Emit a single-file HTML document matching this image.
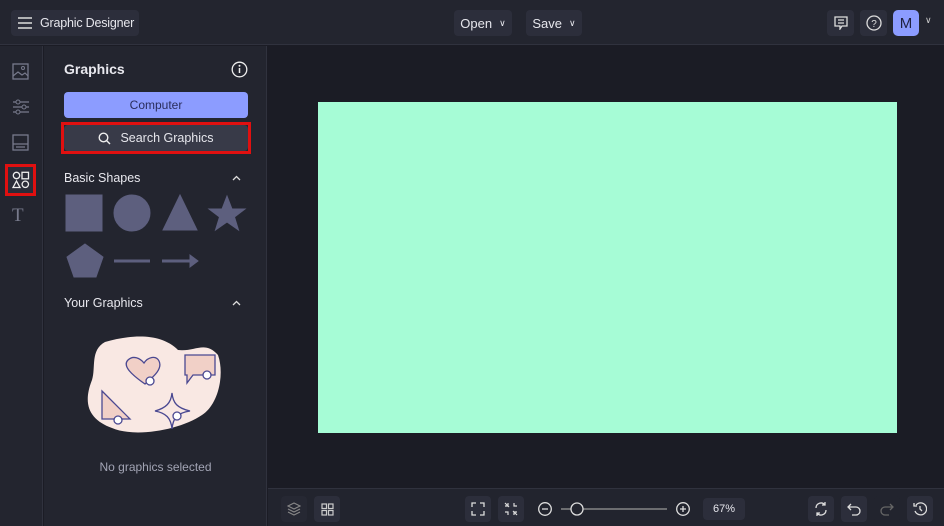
<!DOCTYPE html>
<html><head><meta charset="utf-8"><style>
*{margin:0;padding:0;box-sizing:border-box}
body{width:944px;height:526px;background:#1b1c25;font-family:"Liberation Sans",sans-serif;color:#e8e8ee;position:relative;overflow:hidden}
.abs{position:absolute;white-space:nowrap}
.btn{position:absolute;background:#2c2e3b;border-radius:4px;display:flex;align-items:center;justify-content:center;font-size:13px;color:#e6e6ec;white-space:nowrap}
svg{display:block}
</style></head><body>
<div class="abs" style="left:0;top:0;width:944px;height:45px;background:#23252f;border-bottom:1px solid #30323e"></div>
<div class="btn" style="left:11px;top:10px;width:128px;height:26px;justify-content:flex-start;padding-left:7px;font-size:12.5px">
<svg width="14" height="12"><path d="M0 1h14M0 6h14M0 11h14" stroke="#ddd" stroke-width="1.5"/></svg><span style="margin-left:8px;letter-spacing:-0.2px">Graphic Designer</span></div>
<div class="btn" style="left:454px;top:10px;width:58px;height:26px">Open <span style="font-size:9px;margin-left:7px">∨</span></div>
<div class="btn" style="left:526px;top:10px;width:56px;height:26px">Save <span style="font-size:9px;margin-left:7px">∨</span></div>
<div class="btn" style="left:827px;top:10px;width:27px;height:26px"><svg width="14" height="14"><path d="M1 1h12v9H8l-2 3v-3H1z M4 4h6M4 7h6" fill="none" stroke="#ddd" stroke-width="1.3"/></svg></div>
<div class="btn" style="left:860px;top:10px;width:27px;height:26px"><svg width="16" height="16"><circle cx="8" cy="8" r="7" fill="none" stroke="#ddd" stroke-width="1.3"/><text x="8" y="12" font-size="10" fill="#ddd" text-anchor="middle" font-family="Liberation Sans">?</text></svg></div>
<div class="btn" style="left:893px;top:10px;width:26px;height:26px;background:#8c9cff;color:#1f2140;font-size:15px;border-radius:5px">M</div>
<div class="abs" style="left:925px;top:15px;font-size:9px;color:#ccc">∨</div>

<div class="abs" style="left:0;top:46px;width:43px;height:480px;background:#23252f;border-right:1px solid #30323e"></div>
<svg class="abs" style="left:12px;top:63px" width="18" height="18"><rect x="1" y="1" width="15" height="15" fill="none" stroke="#777a8c" stroke-width="1.3"/><path d="M1 13l5-4 4 3 3-2 3 3" fill="none" stroke="#777a8c" stroke-width="1.2"/><circle cx="11" cy="5" r="1.5" fill="none" stroke="#777a8c"/></svg>
<svg class="abs" style="left:12px;top:98px" width="18" height="18"><path d="M1 4h16M1 9h16M1 14h16" stroke="#777a8c" stroke-width="1.2"/><circle cx="6" cy="4" r="2" fill="#23252f" stroke="#777a8c"/><circle cx="12" cy="9" r="2" fill="#23252f" stroke="#777a8c"/><circle cx="6" cy="14" r="2" fill="#23252f" stroke="#777a8c"/></svg>
<svg class="abs" style="left:12px;top:134px" width="18" height="18"><rect x="1" y="1" width="15" height="15" fill="none" stroke="#777a8c" stroke-width="1.3"/><path d="M1 10h15M4 13h9" stroke="#777a8c" stroke-width="1.2"/></svg>
<div class="abs" style="left:5px;top:164px;width:31px;height:32px;border:3px solid #e01010;background:#2b2d39"></div>
<svg class="abs" style="left:12px;top:171px" width="18" height="18"><circle cx="4.5" cy="4.5" r="3.2" fill="none" stroke="#eee" stroke-width="1.3"/><rect x="10" y="1.3" width="6.5" height="6.5" fill="none" stroke="#eee" stroke-width="1.3"/><path d="M4.5 10l3.5 6.5H1z" fill="none" stroke="#eee" stroke-width="1.3"/><circle cx="13.3" cy="13.3" r="3.2" fill="none" stroke="#eee" stroke-width="1.3"/></svg>
<div class="abs" style="left:12px;top:205px;font-size:19px;color:#777a8c;font-family:'Liberation Serif',serif">T</div>

<div class="abs" style="left:44px;top:46px;width:223px;height:480px;background:#23252f;border-right:1px solid #30323e"></div>
<div class="abs" style="left:64px;top:61px;font-size:14px;font-weight:bold">Graphics</div>
<svg class="abs" style="left:231px;top:61px" width="17" height="17"><circle cx="8.5" cy="8.5" r="7.3" fill="none" stroke="#eee" stroke-width="1.3"/><path d="M8.5 7v5" stroke="#eee" stroke-width="1.5"/><circle cx="8.5" cy="4.8" r="1" fill="#eee"/></svg>
<div class="btn" style="left:64px;top:92px;width:184px;height:26px;background:#8c9cff;color:#2a2d5c;font-size:12px">Computer</div>
<div class="abs" style="left:61px;top:122px;width:190px;height:32px;border:3px solid #e01010"></div>
<div class="btn" style="left:64px;top:125px;width:184px;height:26px;background:#383a48;font-size:12.5px"><svg width="13" height="13"><circle cx="5.5" cy="5.5" r="4.3" fill="none" stroke="#eee" stroke-width="1.4"/><path d="M8.5 8.5l3.5 3.5" stroke="#eee" stroke-width="1.4"/></svg><span style="margin-left:9px">Search Graphics</span></div>
<div class="abs" style="left:64px;top:171px;font-size:12.5px">Basic Shapes</div>
<svg class="abs" style="left:232px;top:175px" width="9" height="6"><path d="M1 5l3.5-3.5L8 5" fill="none" stroke="#ddd" stroke-width="1.3"/></svg>
<svg class="abs" style="left:64px;top:193px" width="186" height="90">
<g fill="#5d5f7e" stroke="#5d5f7e"><rect x="2" y="2" width="36" height="36"/><circle cx="68" cy="20" r="18"/><path d="M116 2l17 35H99z"/><path d="M163 3l5 13h13l-10.5 8 4 13-11.5-8-11.5 8 4-13L145 16h13z"/>
<path d="M21 51l18 13-7 20H10L3 64z"/><path d="M50 68h36" stroke-width="3" fill="none"/><path d="M98 68h30" stroke-width="3" fill="none"/><path d="M126 62l8 6-8 6z"/></g></svg>
<div class="abs" style="left:64px;top:296px;font-size:12.5px">Your Graphics</div>
<svg class="abs" style="left:232px;top:300px" width="9" height="6"><path d="M1 5l3.5-3.5L8 5" fill="none" stroke="#ddd" stroke-width="1.3"/></svg>
<svg class="abs" style="left:60px;top:320px" width="200" height="125">
<path d="M45 22C70 15 100 12 118 30C135 32 145 20 158 35C165 55 158 85 142 95C120 110 75 118 52 108C30 100 22 85 32 60C36 48 30 30 45 22z" fill="#f9e8e3"/>
<g stroke="#4a4891" stroke-width="1.3" fill="#f1d0c7">
<path d="M85 64C72 55 62 46 68 40C73 35 80 38 84 43C88 37 96 35 99 41C103 49 93 57 85 64z"/><circle cx="90" cy="61" r="4" fill="#fff"/>
<path d="M125 35h30v20h-22l-6 8v-8h-2z"/><circle cx="147" cy="55" r="4" fill="#fff"/>
<path d="M42 71l28 28H42z"/><circle cx="58" cy="100" r="4" fill="#fff"/>
<path d="M112 73C113 83 117 88 130 91C117 93 113 98 112 109C111 98 106 93 95 91C106 88 111 83 112 73z" fill="#f9e8e3"/><circle cx="117" cy="96" r="4" fill="#fff"/></g>
</svg>
<div class="abs" style="left:44px;top:460px;width:223px;text-align:center;font-size:12px;color:#a2a4b4">No graphics selected</div>

<div class="abs" style="left:318px;top:102px;width:579px;height:331px;background:#a6fcd6"></div>

<div class="abs" style="left:268px;top:488px;width:676px;height:38px;background:#22242e;border-top:1px solid #30323e"></div>
<div class="btn" style="left:281px;top:496px;width:26px;height:26px;background:#262833"><svg width="14" height="14"><path d="M7 1l6 3-6 3-6-3z M1 7l6 3 6-3 M1 10l6 3 6-3" fill="none" stroke="#888" stroke-width="1.1"/></svg></div>
<div class="btn" style="left:314px;top:496px;width:26px;height:26px"><svg width="13" height="13"><g fill="none" stroke="#ccc" stroke-width="1.2"><rect x="1" y="1" width="4.5" height="4.5"/><rect x="7.5" y="1" width="4.5" height="4.5"/><rect x="1" y="7.5" width="4.5" height="4.5"/><rect x="7.5" y="7.5" width="4.5" height="4.5"/></g></svg></div>
<div class="btn" style="left:465px;top:496px;width:26px;height:26px"><svg width="14" height="14"><path d="M1 5V1h4M9 1h4v4M13 9v4H9M5 13H1V9" fill="none" stroke="#ddd" stroke-width="1.3"/></svg></div>
<div class="btn" style="left:498px;top:496px;width:26px;height:26px"><svg width="14" height="14"><path d="M1 4h3V1M10 1v3h3M13 10h-3v3M4 13v-3H1M5 5L1 1M9 9l4 4" fill="none" stroke="#ddd" stroke-width="1.2"/></svg></div>
<svg class="abs" style="left:537px;top:501px" width="130" height="16"><circle cx="8" cy="8" r="6.3" fill="none" stroke="#ddd" stroke-width="1.3"/><path d="M5 8h6" stroke="#ddd" stroke-width="1.3"/><path d="M24 8h10M46 8h84" stroke="#999" stroke-width="1.2"/><circle cx="40" cy="8" r="6" fill="none" stroke="#ddd" stroke-width="1.3"/></svg>
<svg class="abs" style="left:675px;top:501px" width="16" height="16"><circle cx="8" cy="8" r="6.3" fill="none" stroke="#ddd" stroke-width="1.3"/><path d="M5 8h6M8 5v6" stroke="#ddd" stroke-width="1.3"/></svg>
<div class="btn" style="left:703px;top:498px;width:42px;height:22px;font-size:11px">67%</div>
<div class="btn" style="left:808px;top:496px;width:26px;height:26px"><svg width="14" height="14"><path d="M2 6a5 5 0 0 1 9-3M12 8a5 5 0 0 1-9 3M11 0v3H8M3 14v-3h3" fill="none" stroke="#ddd" stroke-width="1.3"/></svg></div>
<div class="btn" style="left:841px;top:496px;width:26px;height:26px"><svg width="14" height="14"><path d="M4 2L1 5l3 3M1 5h8a4 4 0 0 1 0 8H5" fill="none" stroke="#ddd" stroke-width="1.3"/></svg></div>
<div class="btn" style="left:874px;top:496px;width:26px;height:26px;background:#22242e"><svg width="14" height="14"><path d="M10 2l3 3-3 3M13 5H5a4 4 0 0 0 0 8h4" fill="none" stroke="#666" stroke-width="1.3"/></svg></div>
<div class="btn" style="left:907px;top:496px;width:26px;height:26px"><svg width="14" height="14"><path d="M3 3a6 6 0 1 1-1 6M1 1v3h3M7 4v3l2 2" fill="none" stroke="#ddd" stroke-width="1.3"/></svg></div>
</body></html>
